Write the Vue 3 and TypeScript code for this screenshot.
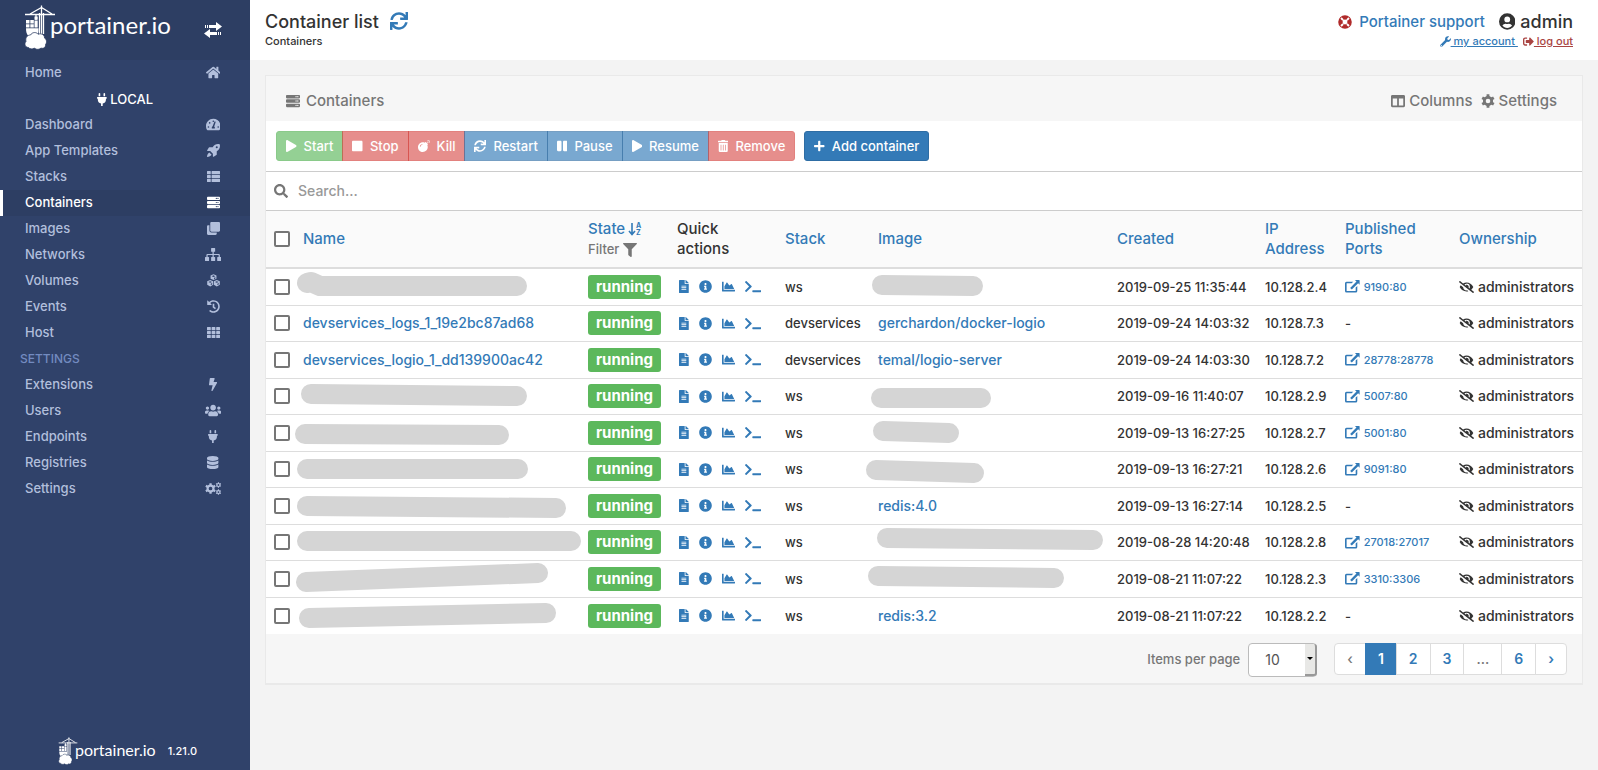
<script setup lang="ts">
import { h, ref, type FunctionalComponent } from 'vue'

type Glyph = [width: number, path: string]
type Stroke = number[][]

const serverRow = (y: number): string =>
  `M480 ${y + 128}H32c-18 0-32-14-32-32V${y + 32}c0-18 14-32 32-32h448c18 0 32 14 32 32v64c0 18-14 32-32 32zm-48-88a24 24 0 1 0 0 48 24 24 0 0 0 0-48zm-64 0a24 24 0 1 0 0 48 24 24 0 0 0 0-48z`
const cell = (x: number, y: number, w: number, hh: number): string => `M${x + 20} ${y}h${w - 40}q20 0 20 20v${hh - 40}q0 20-20 20h-${w - 40}q-20 0-20-20v-${hh - 40}q0-20 20-20z`
const gear = (cx: number, cy: number, r: number, teeth: number): string => {
  const points: string[] = []
  for (let i = 0; i < teeth; i++) {
    const base = (i * 2 * Math.PI) / teeth
    const steps: [number, number][] = [[-0.5, 0.72], [-0.26, 0.76], [-0.2, 1], [0.2, 1], [0.26, 0.76], [0.5, 0.72]]
    for (const [a, k] of steps) {
      const t = base + (a * 2 * Math.PI) / teeth
      points.push(`${Math.round(cx + Math.sin(t) * r * k)} ${Math.round(cy - Math.cos(t) * r * k)}`)
    }
  }
  const q = Math.round(r * 0.34)
  return `M${points.join('L')}zM${cx - q} ${cy}a${q} ${q} 0 1 0 ${2 * q} 0a${q} ${q} 0 1 0 -${2 * q} 0z`
}

const glyphs: Record<string, Glyph> = {
  play: [448, 'M424.4 214.7L72.4 6.6C43.8-10.3 0 6.1 0 47.9V464c0 37.5 40.7 60.1 72.4 41.3l352-208c31.4-18.5 31.5-64.1 0-82.6z'],
  stop: [448, 'M400 32H48C21.5 32 0 53.5 0 80v352c0 26.5 21.5 48 48 48h352c26.5 0 48-21.5 48-48V80c0-26.5-21.5-48-48-48z'],
  pause: [448, 'M144 479H48c-26.5 0-48-21.5-48-48V79c0-26.5 21.5-48 48-48h96c26.5 0 48 21.5 48 48v352c0 26.5-21.5 48-48 48zm304-48V79c0-26.5-21.5-48-48-48h-96c-26.5 0-48 21.5-48 48v352c0 26.5 21.5 48 48 48h96c26.5 0 48-21.5 48-48z'],
  bomb: [512, 'M440.5 88.5l-52 52L415 167c9.4 9.4 9.4 24.6 0 33.9l-17.4 17.4c11.8 26.1 18.4 55.1 18.4 85.6 0 114.9-93.1 208-208 208S0 418.9 0 304 93.1 96 208 96c30.5 0 59.5 6.6 85.6 18.4L311 97c9.4-9.4 24.6-9.4 33.9 0l26.5 26.5 52-52 17.1 17zM500 60h-24c-6.6 0-12 5.4-12 12s5.4 12 12 12h24c6.6 0 12-5.4 12-12s-5.4-12-12-12zM440 0c-6.6 0-12 5.4-12 12v24c0 6.6 5.4 12 12 12s12-5.4 12-12V12c0-6.600-5.400-12-12-12zm33.900 55l17-17c4.700-4.700 4.700-12.300 0-17-4.700-4.700-12.300-4.700-17 0l-17 17c-4.700 4.700-4.700 12.300 0 17 4.800 4.700 12.400 4.700 17 0zm-67.800 0c4.700 4.700 12.300 4.700 17 0 4.700-4.700 4.700-12.300 0-17l-17-17c-4.700-4.700-12.300-4.700-17 0-4.700 4.700-4.700 12.300 0 17l17 17zm67.800 34c-4.700-4.700-12.300-4.700-17 0-4.700 4.700-4.700 12.300 0 17l17 17c4.700 4.700 12.300 4.700 17 0 4.700-4.700 4.700-12.300 0-17l-17-17zM112 272c0-35.300 28.700-64 64-64 8.800 0 16-7.200 16-16s-7.200-16-16-16c-52.900 0-96 43.100-96 96 0 8.800 7.200 16 16 16s16-7.200 16-16z'],
  sync: [512, 'M440.935 12.574l3.966 82.766C399.416 41.904 331.674 8 256 8 134.813 8 33.933 94.924 12.296 209.824 10.908 217.193 16.604 224 24.103 224h49.084c5.57 0 10.377-3.842 11.676-9.259C103.407 137.408 172.931 80 256 80c60.893 0 114.512 30.856 146.104 77.801l-101.53-4.865c-6.845-.328-12.574 5.133-12.574 11.986v47.411c0 6.627 5.373 12 12 12h200.333c6.627 0 12-5.373 12-12V12c0-6.627-5.373-12-12-12h-47.411c-6.853 0-12.315 5.729-11.987 12.574zM256 432c-60.895 0-114.517-30.858-146.109-77.805l101.868 4.871c6.845.327 12.573-5.134 12.573-11.986v-47.412c0-6.627-5.373-12-12-12H12c-6.627 0-12 5.373-12 12V500c0 6.627 5.373 12 12 12h47.385c6.863 0 12.328-5.745 11.985-12.599l-4.129-82.575C112.725 470.166 180.405 504 256 504c121.187 0 222.067-86.924 243.704-201.824 1.388-7.369-4.308-14.176-11.807-14.176h-49.084c-5.57 0-10.377 3.842-11.676 9.259C408.593 374.592 339.069 432 256 432z'],
  trash: [448, 'M32 464a48 48 0 0 0 48 48h288a48 48 0 0 0 48-48V128H32zm272-256a16 16 0 0 1 32 0v224a16 16 0 0 1-32 0zm-96 0a16 16 0 0 1 32 0v224a16 16 0 0 1-32 0zm-96 0a16 16 0 0 1 32 0v224a16 16 0 0 1-32 0zM432 32H312l-9.400-18.700A24 24 0 0 0 281.100 0H166.800a23.720 23.720 0 0 0-21.400 13.300L136 32H16A16 16 0 0 0 0 48v32a16 16 0 0 0 16 16h416a16 16 0 0 0 16-16V48a16 16 0 0 0-16-16z'],
  plus: [448, 'M416 208H272V64c0-17.670-14.330-32-32-32h-32c-17.670 0-32 14.330-32 32v144H32c-17.670 0-32 14.330-32 32v32c0 17.670 14.330 32 32 32h144v144c0 17.670 14.330 32 32 32h32c17.670 0 32-14.330 32-32V304h144c17.670 0 32-14.330 32-32v-32c0-17.670-14.330-32-32-32z'],
  search: [512, 'M505 442.700L405.300 343c-4.500-4.500-10.600-7-17-7H372c27.600-35.300 44-79.700 44-128C416 93.100 322.900 0 208 0S0 93.100 0 208s93.100 208 208 208c48.300 0 92.700-16.400 128-44v16.300c0 6.400 2.500 12.500 7 17l99.700 99.700c9.400 9.400 24.600 9.400 33.900 0l28.300-28.300c9.400-9.400 9.400-24.600.1-34zM208 336c-70.700 0-128-57.200-128-128 0-70.700 57.200-128 128-128 70.700 0 128 57.200 128 128 0 70.700-57.200 128-128 128z'],
  filter: [512, 'M487.976 0H24.028C2.710 0-8.047 25.866 7.058 40.971L192 225.941V432c0 7.831 3.821 15.170 10.237 19.662l80 55.980C298.020 518.690 320 507.493 320 487.980V225.941l184.947-184.970C520.021 25.896 509.338 0 487.976 0z'],
  file: [384, 'M224 136V0H24C10.700 0 0 10.700 0 24v464c0 13.300 10.700 24 24 24h336c13.300 0 24-10.700 24-24V160H248c-13.200 0-24-10.800-24-24zm64 236c0 6.600-5.400 12-12 12H108c-6.600 0-12-5.400-12-12v-8c0-6.600 5.400-12 12-12h168c6.600 0 12 5.400 12 12v8zm0-64c0 6.600-5.400 12-12 12H108c-6.600 0-12-5.400-12-12v-8c0-6.600 5.400-12 12-12h168c6.600 0 12 5.400 12 12v8zm0-72v8c0 6.600-5.400 12-12 12H108c-6.600 0-12-5.400-12-12v-8c0-6.600 5.400-12 12-12h168c6.600 0 12 5.400 12 12zm96-114.100v6.100H256V0h6.100c6.400 0 12.500 2.500 17 7l97.900 98c4.500 4.500 7 10.600 7 16.900z'],
  info: [512, 'M256 8C119 8 8 119 8 256s111 248 248 248 248-111 248-248S393 8 256 8zm0 110c23.200 0 42 18.800 42 42s-18.800 42-42 42-42-18.800-42-42 18.800-42 42-42zm56 254c0 6.600-5.400 12-12 12h-88c-6.600 0-12-5.400-12-12v-24c0-6.600 5.400-12 12-12h12v-64h-12c-6.600 0-12-5.400-12-12v-24c0-6.600 5.400-12 12-12h64c6.600 0 12 5.400 12 12v100h12c6.600 0 12 5.400 12 12v24z'],
  chart: [512, 'M500 384c6.600 0 12 5.400 12 12v40c0 6.600-5.400 12-12 12H12c-6.600 0-12-5.400-12-12V76c0-6.600 5.400-12 12-12h40c6.600 0 12 5.400 12 12v308h436zM372.700 159.500L288 216l-85.300-113.700c-5.100-6.800-15.500-6.300-19.900 1L96 248v104h384l-89.900-187.800c-3.200-6.500-11.400-8.700-17.400-4.700z'],
  terminal: [640, 'M257.981 272.971L63.638 467.314c-9.373 9.373-24.569 9.373-33.941 0L7.029 444.647c-9.357-9.357-9.375-24.522-.04-33.901L161.011 256 6.990 101.255c-9.335-9.379-9.317-24.544.04-33.901l22.667-22.667c9.373-9.373 24.569-9.373 33.941 0L257.981 239.030c9.373 9.372 9.373 24.568 0 33.941zM640 456v-32c0-13.255-10.745-24-24-24H312c-13.255 0-24 10.745-24 24v32c0 13.255 10.745 24 24 24h304c13.255 0 24-10.745 24-24z'],
  external: [576, 'M420 300l64-60v196q0 60-60 60H60q-60 0-60-60V124q0-60 60-60h264l-60 64H64v304h356zM390 0h170q16 0 16 16v170l-58-58-250 250-66-66 250-250z'],
  eyeslash: [640, 'M320 400c-75.850 0-137.250-58.710-142.900-133.110L72.200 185.820c-13.790 17.300-26.480 35.590-36.720 55.590a32.350 32.350 0 0 0 0 29.190C89.710 376.410 197.070 448 320 448c26.910 0 52.870-4 77.890-10.460L346 397.390a144.130 144.130 0 0 1-26 2.610zm313.820 58.100l-110.550-85.440a331.250 331.250 0 0 0 81.250-102.070 32.350 32.350 0 0 0 0-29.190C550.290 135.590 442.930 64 320 64a308.150 308.150 0 0 0-147.320 37.700L45.460 3.370A16 16 0 0 0 23 6.180L3.370 31.450A16 16 0 0 0 6.180 53.900l588.360 454.730a16 16 0 0 0 22.460-2.810l19.640-25.270a16 16 0 0 0-2.820-22.450zm-183.720-142l-39.300-30.380A94.750 94.750 0 0 0 416 256a94.760 94.760 0 0 0-121.310-92.210A47.650 47.650 0 0 1 304 192a46.640 46.640 0 0 1-1.540 10l-73.610-56.890A142.310 142.310 0 0 1 320 112a143.920 143.920 0 0 1 144 144c0 21.630-5.290 41.790-13.900 60.110z'],
  home: [576, 'M280 148L96 300v164q0 16 16 16h112q16 0 16-16v-96q0-16 16-16h64q16 0 16 16v96q0 16 16 16h112q16 0 16-16V300L296 148q-8-6-16 0zM572 251L488 182V44q0-12-12-12h-56q-12 0-12 12v72l-90-74q-30-22-60 0L4 251q-8 8-2 17l26 31q8 8 17 2L280 107q8-6 16 0l235 194q9 6 17-2l26-31q6-9-2-17z'],
  gauge: [576, 'M288 32C129 32 0 161 0 320q0 80 36 145 8 15 28 15h448q20 0 28-15 36-65 36-145C576 161 447 32 288 32zM288 96a32 32 0 1 1 0 64 32 32 0 0 1 0-64zM96 384a32 32 0 1 1 0-64 32 32 0 0 1 0 64zM144 224a32 32 0 1 1 0-64 32 32 0 0 1 0 64zM343 416H233q-22-60 28-91l71-178q12-20 32-12 20 8 14 28l-56 168q40 32 21 85zM480 384a32 32 0 1 1 0-64 32 32 0 0 1 0 64z'],
  rocket: [512, 'M505 19q-3-10-12-12c-120-24-200 20-270 120H96q-14 0-22 14L8 250q-10 26 18 30h100l106 106v100q4 28 30 18l108-66q14-8 14-22V289c100-70 144-150 121-270zM384 168a40 40 0 1 1 0-80 40 40 0 0 1 0 80zM90 330l92 92C150 470 90 512 0 512c0-90 42-150 90-182z'],
  list: [512, cell(0, 40, 148, 124) + cell(180, 40, 332, 124) + cell(0, 194, 148, 124) + cell(180, 194, 332, 124) + cell(0, 348, 148, 124) + cell(180, 348, 332, 124)],
  server: [512, serverRow(32) + serverRow(192) + serverRow(352)],
  clone: [512, 'M464 0c26 0 48 22 48 48v288c0 26-22 48-48 48H176c-26 0-48-22-48-48V48c0-26 22-48 48-48h288zM176 416c-44 0-80-36-80-80V128H48c-26 0-48 22-48 48v288c0 26 22 48 48 48h288c26 0 48-22 48-48v-48H176z'],
  sitemap: [640, cell(240, 0, 160, 150) + cell(0, 352, 160, 160) + cell(240, 352, 160, 160) + cell(480, 352, 160, 160) + 'M296 150h48v82h200q40 0 40 40v80h-48v-72H344v72h-48v-72H104v72H56v-80q0-40 40-40h200z'],
  cubes: [512, 'M256 10l116 46v130l-116 54-116-54V56zM256 54l-72 30 72 30 72-30zM278 152v50l54-26v-48zM126 238l116 48v142l-116 66L8 428V286zM126 282l-72 30 72 30 72-30zM148 380v58l54-28v-52zM386 238l118 48v142l-118 66-116-66V286zM386 282l-72 30 72 30 72-30zM408 380v58l54-28v-52z'],
  history: [512, 'M504 255.500c.3 136.600-111.200 248.400-247.800 248.500-59 0-113.200-20.500-155.800-54.900-11.100-8.900-11.900-25.500-1.800-35.600l11.300-11.300c8.600-8.600 22.400-9.600 31.900-2C173.100 425.100 212.800 440 256 440c101.700 0 184-82.300 184-184 0-101.700-82.300-184-184-184-48.800 0-93.100 19-126.100 49.900l50.800 50.800c10.100 10.100 2.900 27.300-11.300 27.300H24c-8.800 0-16-7.200-16-16V38.600c0-14.300 17.200-21.400 27.300-11.300l49.400 49.400C129.200 34.100 189.600 8 256 8c136.800 0 247.700 110.800 248 247.500zM224 144h64v118l66 50-38 52-92-70z'],
  grid: [512, [40, 194, 348].map((y) => cell(0, y, 150, 124) + cell(181, y, 150, 124) + cell(362, y, 150, 124)).join('')],
  bolt: [320, 'M296 160H180.600l42.600-129.800C227.200 15 215.700 0 200 0H56C44 0 33.800 8.900 32.200 20.800l-32 240C-1.700 275.200 9.500 288 24 288h118.700L96.600 482.500c-3.600 15.200 8 29.500 23.300 29.500 8.400 0 16.400-4.400 20.800-12l176-304c9.300-15.900-2.200-36-20.700-36z'],
  users: [640, 'M96 224c35 0 64-29 64-64s-29-64-64-64-64 29-64 64 29 64 64 64zm448 0c35 0 64-29 64-64s-29-64-64-64-64 29-64 64 29 64 64 64zm32 32h-64c-18 0-34 7-45 19 40 22 68 62 74 109h67c18 0 32-14 32-32v-32c0-35-29-64-64-64zM320 256c62 0 112-50 112-112S382 32 320 32 208 82 208 144s50 112 112 112zm77 32h-8c-42 20-96 20-138 0h-8c-64 0-115 52-115 115v29c0 26 21 48 48 48h288c27 0 48-22 48-48v-29c0-63-51-115-115-115zM173 275c-11-12-27-19-45-19H64c-35 0-64 29-64 64v32c0 18 14 32 32 32h67c6-47 34-87 74-109z'],
  plug: [384, 'M320 32a32 32 0 0 0-64 0v96h64zm48 128H16A16 16 0 0 0 0 176v32a16 16 0 0 0 16 16h16v32a160 160 0 0 0 128 157v99h64v-99a160 160 0 0 0 128-157v-32h16a16 16 0 0 0 16-16v-32a16 16 0 0 0-16-16zM128 32a32 32 0 0 0-64 0v96h64z'],
  database: [448, 'M448 73v46c0 40-100 73-224 73S0 159 0 119V73C0 33 100 0 224 0s224 33 224 73zm0 103v103c0 40-100 73-224 73S0 319 0 279V176c48 33 136 49 224 49s176-16 224-49zm0 160v103c0 40-100 73-224 73S0 479 0 439V336c48 33 136 49 224 49s176-16 224-49z'],
  cog: [512, gear(256, 256, 250, 6)],
  cogs: [640, gear(218, 256, 216, 6) + gear(530, 116, 110, 6) + gear(530, 398, 110, 6)],
  columns: [512, 'M464 32H48C21 32 0 53 0 80v352c0 27 21 48 48 48h416c27 0 48-21 48-48V80c0-27-21-48-48-48zM224 416H64V160h160zm224 0H288V160h160z'],
  ring: [512, 'M256 8a248 248 0 1 0 0 496 248 248 0 0 0 0-496zM256 166a90 90 0 1 0 0 180 90 90 0 0 0 0-180zM86 136l50-50 74 74-50 50zM426 136l-50-50-74 74 50 50zM86 376l50 50 74-74-50-50zM426 376l-50 50-74-74 50-50z'],
  user: [496, 'M248 8a248 248 0 1 0 0 496 248 248 0 0 0 0-496zm0 96a88 88 0 1 1 0 176 88 88 0 0 1 0-176zm0 344c-59 0-111-27-146-69 19-35 56-59 98-59 14 0 22 8 48 8s34-8 48-8c42 0 79 24 98 59-35 42-87 69-146 69z'],
  wrench: [512, 'M507 114q-4-14-14-4l-74 74-68-11-11-68 74-74q10-10-4-14C300-10 210 80 239 190L22 407a59 59 0 0 0 83 83l217-217c110 28 210-60 185-159zM64 472a24 24 0 1 1 0-48 24 24 0 0 1 0 48z'],
  signout: [512, 'M497 273L329 441c-15 15-41 5-41-17v-96H152c-13 0-24-11-24-24v-96c0-13 11-24 24-24h136V88c0-21 26-32 41-17l168 168c9 9 9 25 0 34zM192 436v-40c0-7-5-12-12-12H96c-18 0-32-14-32-32V160c0-18 14-32 32-32h84c7 0 12-5 12-12V76c0-7-5-12-12-12H96c-53 0-96 43-96 96v192c0 53 43 96 96 96h84c7 0 12-5 12-12z'],
}

const Icon: FunctionalComponent<{ name: string }> = (props) => {
  const [width, path] = glyphs[props.name]
  return h('svg', { class: 'icon', viewBox: `0 0 ${width} 512`, 'aria-hidden': 'true' }, [h('path', { d: path, fill: 'currentColor', 'fill-rule': 'evenodd' })])
}
Icon.props = ['name']

const Crane: FunctionalComponent = () =>
  h('svg', { class: 'crane', viewBox: '24 5 32 45', 'aria-hidden': 'true' }, [
    h('path', { d: 'M25 14.500H55M41.500 5.500V34M39.500 13V34M43.500 13V34M30 14L41.500 7.500 52 14M36 15v5', fill: 'none', stroke: '#fff', 'stroke-width': 1.300 }),
    h('path', { d: 'M26 20h3.500v3.500H26zM30.300 20h3.500v3.500h-3.500zM34.500 16.500h3.200v3.200h-3.200zM26 24.200h3.500v3.300H26zM30.300 24.200h3.500v3.300h-3.500zM34.500 20.500h3.200v7h-3.200zM26 28.200h12.500v3c0 3-2 4-5 4.800h-5c-2-2-2.500-4-2.500-7.800z', fill: '#fff' }),
    h('path', { d: 'M28.500 47.500c-3.500 0-4.500-4-2.500-6-1-4 1.500-6.500 4.500-6.500 1.500-3 6-3.200 7.500-.8 3.500-1.200 6.800.8 6.500 3.800 2.500 1.500 2.500 5 1 6.500 .5 3-2.500 4.500-4.500 3.500-2 2-5.500 1.500-6.500 0-2 1.500-5 1-6-.5z', fill: '#fff', stroke: '#2d3e63', 'stroke-width': 0.800 }),
  ])

const mainMenu: [string, string][] = [
  ['Dashboard', 'gauge'], ['App Templates', 'rocket'], ['Stacks', 'list'], ['Containers', 'server'], ['Images', 'clone'],
  ['Networks', 'sitemap'], ['Volumes', 'cubes'], ['Events', 'history'], ['Host', 'grid'],
]
const settingsMenu: [string, string][] = [['Extensions', 'bolt'], ['Users', 'users'], ['Endpoints', 'plug'], ['Registries', 'database'], ['Settings', 'cogs']]

const actions: [string, string, string][] = [
  ['Start', 'play', 'success'], ['Stop', 'stop', 'danger'], ['Kill', 'bomb', 'danger'], ['Restart', 'sync', 'primary'],
  ['Pause', 'pause', 'primary'], ['Resume', 'play', 'primary'], ['Remove', 'trash', 'danger'],
]
const quickActions: [string, string][] = [['Logs', 'file'], ['Inspect', 'info'], ['Stats', 'chart'], ['Console', 'terminal']]

interface Row { name: string | Stroke; stack: string; image: string | Stroke; created: string; ip: string; port: string }
const rows: Row[] = [
  { name: [[4, 6], [8, 5], [17, 9], [214, 9]], stack: 'ws', image: [[4, 8], [95, 9]], created: '2019-09-25 11:35:44', ip: '10.128.2.4', port: '9190:80' },
  { name: 'devservices_logs_1_19e2bc87ad68', stack: 'devservices', image: 'gerchardon/docker-logio', created: '2019-09-24 14:03:32', ip: '10.128.7.3', port: '' },
  { name: 'devservices_logio_1_dd139900ac42', stack: 'devservices', image: 'temal/logio-server', created: '2019-09-24 14:03:30', ip: '10.128.7.2', port: '28778:28778' },
  { name: [[8, 8], [214, 10]], stack: 'ws', image: [[3, 12], [103, 12]], created: '2019-09-16 11:40:07', ip: '10.128.2.9', port: '5007:80' },
  { name: [[2, 11], [196, 12]], stack: 'ws', image: [[5, 8], [71, 10]], created: '2019-09-13 16:27:25', ip: '10.128.2.7', port: '5001:80' },
  { name: [[4, 10], [215, 10]], stack: 'ws', image: [[-2, 11], [96, 14]], created: '2019-09-13 16:27:21', ip: '10.128.2.6', port: '9091:80' },
  { name: [[4, 10], [253, 12]], stack: 'ws', image: 'redis:4.0', created: '2019-09-13 16:27:14', ip: '10.128.2.5', port: '' },
  { name: [[4, 9], [268, 9]], stack: 'ws', image: [[9, 6], [215, 8]], created: '2019-08-28 14:20:48', ip: '10.128.2.8', port: '27018:27017' },
  { name: [[3, 13], [235, 4]], stack: 'ws', image: [[0, 7], [176, 9]], created: '2019-08-21 11:07:22', ip: '10.128.2.3', port: '3310:3306' },
  { name: [[6, 12], [243, 7]], stack: 'ws', image: 'redis:3.2', created: '2019-08-21 11:07:22', ip: '10.128.2.2', port: '' },
]
const Redaction: FunctionalComponent<{ points: Stroke }> = (props) =>
  h('svg', { class: 'redaction', 'aria-hidden': 'true' }, [
    h('polyline', { points: props.points.map((p) => p.join(',')).join(' '), fill: 'none', stroke: '#d5d5d5', 'stroke-width': 20, 'stroke-linecap': 'round', 'stroke-linejoin': 'round' }),
  ])
Redaction.props = ['points']

const pages = ['‹', '1', '2', '3', '...', '6', '›']
const search = ref('')
const perPage = ref('10')
</script>

<template>
  <div class="app">
    <aside class="sidebar">
      <div class="brand">
        <a href="#" class="logo"><Crane /><span>portainer.io</span></a>
        <button class="toggle" type="button" aria-label="Toggle sidebar">
          <svg viewBox="0 0 18 16" aria-hidden="true">
            <path d="M1 3h1v3H1zM3 3h1v3H3zM5 3h7V0l6 4.500L12 9V6H5zM17 10h-1v3h1zM15 10h-1v3h1zM13 10H6V7l-6 4.500L6 16v-3h7z" fill="#fff" />
          </svg>
        </button>
      </div>
      <nav>
        <a href="#" class="item"><span>Home</span><span class="slot"><Icon name="home" /></span></a>
        <div class="endpoint"><Icon name="plug" /> LOCAL</div>
        <a v-for="[label, icon] in mainMenu" :key="label" href="#" class="item" :class="{ active: label === 'Containers' }">
          <span>{{ label }}</span><span class="slot"><Icon :name="icon" /></span>
        </a>
        <div class="section">SETTINGS</div>
        <a v-for="[label, icon] in settingsMenu" :key="label" href="#" class="item">
          <span>{{ label }}</span><span class="slot"><Icon :name="icon" /></span>
        </a>
      </nav>
      <div class="version"><span class="logo small"><Crane /><span>portainer.io</span></span><span>1.21.0</span></div>
    </aside>

    <div class="page">
      <header class="top">
        <div>
          <h1>Container list <a href="#" aria-label="Refresh"><Icon name="sync" /></a></h1>
          <div class="crumb">Containers</div>
        </div>
        <div class="account">
          <div class="who">
            <a href="#" class="support"><Icon name="ring" />Portainer support</a>
            <span class="admin"><Icon name="user" />admin</span>
          </div>
          <div class="links">
            <a href="#"><Icon name="wrench" /><u>&nbsp;my account&nbsp;</u></a>
            <a href="#" class="logout"><Icon name="signout" /><u>&nbsp;log out</u></a>
          </div>
        </div>
      </header>

      <main class="widget">
        <div class="widget-head">
          <div class="title"><Icon name="server" />Containers</div>
          <div class="tools"><span><Icon name="columns" /> Columns</span><span><Icon name="cog" /> Settings</span></div>
        </div>
        <div class="actions">
          <div class="group">
            <button v-for="[label, icon, kind] in actions" :key="label" type="button" disabled :class="['btn', kind]"><Icon :name="icon" />{{ label }}</button>
          </div>
          <button type="button" class="btn primary"><Icon name="plus" />Add container</button>
        </div>
        <label class="search"><Icon name="search" /><input v-model="search" type="text" placeholder="Search..." aria-label="Search" /></label>

        <table>
          <colgroup>
            <col /><col class="c-state" /><col class="c-quick" /><col class="c-stack" /><col class="c-image" />
            <col class="c-created" /><col class="c-ip" /><col class="c-ports" /><col class="c-owner" />
          </colgroup>
          <thead>
            <tr>
              <th><div class="name"><input type="checkbox" aria-label="Select all" /><a href="#">Name</a></div></th>
              <th>
                <a href="#">State
                  <svg class="sort" viewBox="0 0 14 14" aria-hidden="true">
                    <path d="M3 1v11M0 9l3 3.500L6 9" fill="none" stroke="currentColor" stroke-width="1.600" />
                    <text x="7" y="6">A</text><text x="7" y="13">Z</text>
                  </svg>
                </a>
                <div class="filter">Filter <Icon name="filter" /></div>
              </th>
              <th>Quick<br />actions</th>
              <th><a href="#">Stack</a></th>
              <th><a href="#">Image</a></th>
              <th><a href="#">Created</a></th>
              <th><a href="#">IP Address</a></th>
              <th><a href="#">Published Ports</a></th>
              <th><a href="#">Ownership</a></th>
            </tr>
          </thead>
          <tbody>
            <tr v-for="(row, i) in rows" :key="i">
              <td>
                <div class="name">
                  <input type="checkbox" :aria-label="`Select row ${i + 1}`" />
                  <a v-if="typeof row.name === 'string'" href="#">{{ row.name }}</a>
                  <Redaction v-else :points="row.name" />
                </div>
              </td>
              <td><span class="badge">running</span></td>
              <td><div class="quick"><a v-for="[label, icon] in quickActions" :key="label" href="#" :aria-label="label"><Icon :name="icon" /></a></div></td>
              <td>{{ row.stack }}</td>
              <td class="image">
                <a v-if="typeof row.image === 'string'" href="#">{{ row.image }}</a>
                <Redaction v-else :points="row.image" />
              </td>
              <td>{{ row.created }}</td>
              <td>{{ row.ip }}</td>
              <td><a v-if="row.port" href="#" class="port"><Icon name="external" /><span>{{ row.port }}</span></a><template v-else>-</template></td>
              <td class="owner"><Icon name="eyeslash" />administrators</td>
            </tr>
          </tbody>
        </table>

        <footer class="pager">
          <label for="per-page">Items per page</label>
          <div class="select">
            <select id="per-page" v-model="perPage"><option>10</option><option>25</option><option>50</option></select>
            <span class="caret"></span>
          </div>
          <nav class="pages" aria-label="Pagination">
            <a v-for="p in pages" :key="p" href="#" :class="{ current: p === '1', muted: p === '‹' || p === '...' }">{{ p }}</a>
          </nav>
        </footer>
      </main>
    </div>
  </div>
</template>

<style>
body { background: #f3f3f3; }
</style>

<style scoped>
* { box-sizing: border-box; }
.app { display: flex; min-height: 100vh; font: 500 14px/20px Inter, "Open Sans", sans-serif; color: #333; }
a { color: #337ab7; text-decoration: none; }
.icon { height: 1em; width: auto; vertical-align: -2px; }

.sidebar { width: 250px; flex: none; display: flex; flex-direction: column; background: #30426a; font-size: 13px; }
.brand { height: 60px; background: #2d3e63; display: flex; align-items: flex-start; justify-content: space-between; padding: 5px 28px 0 24px; }
.logo { display: flex; color: #fff; font: 400 24px/40px Lato, sans-serif; }
.crane { width: 32px; height: 45px; margin-right: -6px; }
.toggle { border: 0; padding: 0; background: none; height: 16px; margin-top: 17px; }
.toggle svg { width: 18px; height: 16px; display: block; }
.item { height: 26px; display: flex; align-items: center; justify-content: space-between; padding: 0 26px 2px 22px; border-left: 3px solid transparent; color: #b2bfdc; }
.item.active { background: #2d3e63; color: #fff; border-color: #fff; }
.slot { width: 22px; display: flex; justify-content: center; padding-top: 1px; }
.endpoint { color: #fff; text-align: center; line-height: 26px; font-size: 13px; }
.section { color: #738bc0; line-height: 26px; padding-left: 20px; font-size: 12px; }
.version { margin-top: auto; padding: 0 0 5px 58px; display: flex; align-items: center; gap: 12px; color: #fff; font-size: 11px; }
.logo.small { font-size: 16px; line-height: 26px; }
.small .crane { width: 20px; height: 28px; margin-right: -3px; }

.page { flex: 1; min-width: 0; }
.top { height: 60px; background: #fff; display: flex; justify-content: space-between; padding: 11px 25px 0 15px; }
h1 { margin: 0; font-size: 18px; line-height: 22px; font-weight: 500; }
h1 .icon { margin-left: 6px; }
.crumb, .links { font-size: 11px; line-height: 16px; }
.who { display: flex; gap: 14px; line-height: 22px; font-size: 15px; }
.support .icon { color: #b02a2a; margin-right: 7px; height: 14px; }
.admin { font-size: 18px; }
.admin .icon { height: 17px; margin-right: 5px; }
.links { display: flex; justify-content: flex-end; gap: 5px; }
.logout { color: #a94442; }

.widget { margin: 15px; background: #fff; border: 1px solid #e9e9e9; border-bottom-width: 2px; }
.widget-head { height: 45px; background: #f6f6f6; display: flex; align-items: center; justify-content: space-between; padding: 4px 25px 0 20px; color: #767676; font-size: 15px; }
.widget-head .icon { height: 14px; }
.title .icon { margin-right: 6px; }
.tools { display: flex; gap: 8px; }
.actions { display: flex; gap: 9px; padding: 10px; border-bottom: 1px solid #ccc; }
.group { display: flex; }
.btn { height: 30px; padding: 0 9px; border: 1px solid; color: #fff; font: 500 13px/18px Inter, sans-serif; border-radius: 3px; display: flex; align-items: center; gap: 7px; }
.btn .icon { height: 12px; }
.btn:disabled { opacity: 0.65; }
.group .btn { border-radius: 0; margin-left: -1px; }
.group .btn:first-child { border-radius: 3px 0 0 3px; margin-left: 0; }
.group .btn:last-child { border-radius: 0 3px 3px 0; }
.success { background: #5cb85c; border-color: #4cae4c; }
.danger { background: #d9534f; border-color: #d43f3a; }
.primary { background: #337ab7; border-color: #2e6da4; }
.search { display: flex; align-items: center; gap: 10px; height: 39px; padding: 0 8px; border-bottom: 1px solid #ccc; color: #767676; }
.search input { flex: 1; border: 0; outline: 0; background: none; padding: 0; font: inherit; color: inherit; }
.search input::placeholder { color: #999; opacity: 1; }

table { width: 100%; table-layout: fixed; border-collapse: separate; border-spacing: 0; font-size: 13px; }
.c-state { width: 89px; } .c-quick { width: 108px; } .c-stack { width: 93px; } .c-image { width: 239px; }
.c-created { width: 148px; } .c-ip { width: 80px; } .c-ports { width: 114px; } .c-owner { width: 131px; }
th { height: 58px; padding: 0 8px; text-align: left; vertical-align: middle; font-weight: 500; font-size: 15px; background: #fafafa; border-bottom: 2px solid #ddd; }
td { height: 37px; padding: 0 8px 1px; vertical-align: middle; white-space: nowrap; border-bottom: 1px solid #ddd; }
tr:nth-child(even) td { height: 36px; }
tr:last-child td { border-bottom: 0; }
.name { display: flex; align-items: center; }
td .name, .image, .owner { font-size: 14px; }
input[type="checkbox"] { appearance: none; flex: none; width: 16px; height: 16px; margin: 0 13px 0 0; border: 2px solid #767676; border-radius: 2px; background: #fff; }
.redaction { display: block; width: 100%; height: 20px; overflow: visible; }
.sort { width: 14px; height: 14px; vertical-align: -2px; overflow: visible; }
.sort text { font: 700 7px Inter, sans-serif; fill: currentColor; }
.filter { font-size: 13px; color: #767676; white-space: nowrap; }
.filter .icon { height: 14px; vertical-align: -3px; }
.badge { display: inline-block; vertical-align: middle; width: 73px; line-height: 24px; text-align: center; color: #fff; font-size: 15px; font-weight: 700; background: #5cb85c; border-radius: 3px; }
.quick { display: flex; align-items: center; gap: 10px; padding-left: 2px; }
.quick a { display: flex; }
.port { font-size: 11px; display: flex; align-items: center; gap: 4px; }
.port .icon { height: 13px; }
.owner .icon { margin-right: 4px; height: 12px; vertical-align: -1px; }

.pager { background: #f6f6f6; height: 49px; display: flex; align-items: center; justify-content: flex-end; padding: 0 15px; color: #767676; font-size: 13px; }
.select { position: relative; margin: 2px 18px 0 8px; }
select { appearance: none; width: 69px; height: 34px; padding: 0 16px; border: 1px solid #bbb; border-radius: 4px; background: #fff; color: #555; font: 400 14px/20px Inter, sans-serif; display: block; }
.caret { position: absolute; right: 0; top: 1px; bottom: 1px; width: 12px; background: #e8e8e6; border-right: 2px solid #999; border-bottom: 2px solid #999; border-radius: 0 3px 3px 0; pointer-events: none; display: flex; align-items: center; justify-content: center; }
.caret::before { content: ""; border: 3px solid transparent; border-top-color: #000; border-bottom: 0; }
.pages { display: flex; font-size: 14px; font-weight: 600; }
.pages a { height: 32px; line-height: 30px; padding: 0 12px; border: 1px solid #ddd; margin-left: -1px; background: #fff; }
.pages a:first-child { border-radius: 4px 0 0 4px; }
.pages a:last-child { border-radius: 0 4px 4px 0; }
.pages .muted { color: #777; font-weight: 500; }
.pages .current { background: #337ab7; border-color: #337ab7; color: #fff; }
</style>
